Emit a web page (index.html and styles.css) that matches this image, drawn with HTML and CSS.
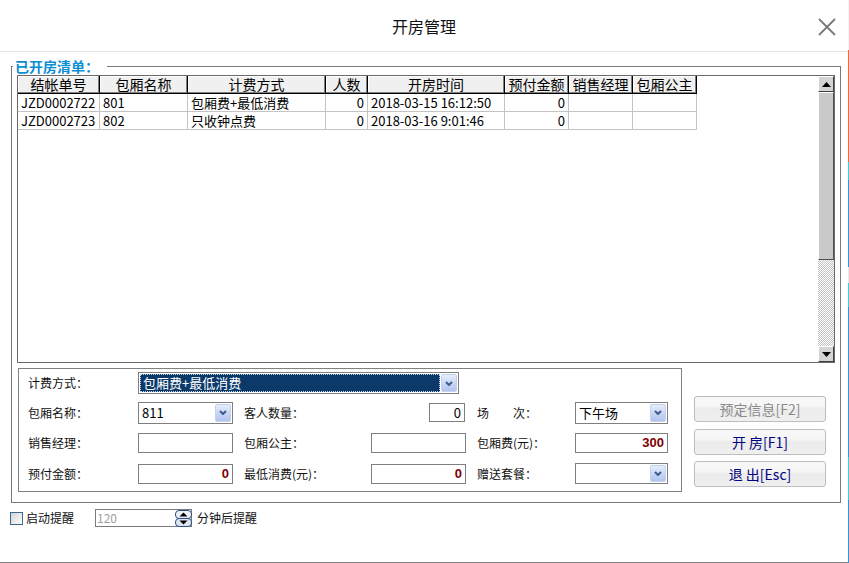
FILE: index.html
```html
<!DOCTYPE html>
<html lang="zh-CN">
<head>
<meta charset="utf-8">
<title>开房管理</title>
<link rel="stylesheet" href="styles.css">
</head>
<body>
<div class="window">
  <div class="dialog">
    <header class="titlebar">
      <span class="spacer"></span>
      <h1 class="title">开房管理</h1>
      <button class="close" type="button" aria-label="关闭">
        <svg width="18" height="18" viewBox="0 0 18 18"><path d="M1 1 L17 17 M17 1 L1 17" stroke="#7a7a7a" stroke-width="1.8" fill="none"/></svg>
      </button>
    </header>

    <fieldset class="group">
      <legend class="group-label">已开房清单：</legend>
      <div class="listview">
        <div class="list-body">
          <table class="grid">
            <colgroup>
              <col class="c1"><col class="c2"><col class="c3"><col class="c4"><col class="c5"><col class="c6"><col class="c7"><col class="c8">
            </colgroup>
            <thead>
              <tr><th>结帐单号</th><th>包厢名称</th><th>计费方式</th><th>人数</th><th>开房时间</th><th>预付金额</th><th>销售经理</th><th>包厢公主</th></tr>
            </thead>
            <tbody>
              <tr><td>JZD0002722</td><td>801</td><td>包厢费+最低消费</td><td class="num">0</td><td>2018-03-15 16:12:50</td><td class="num">0</td><td></td><td></td></tr>
              <tr><td>JZD0002723</td><td>802</td><td>只收钟点费</td><td class="num">0</td><td>2018-03-16 9:01:46</td><td class="num">0</td><td></td><td></td></tr>
            </tbody>
          </table>
        </div>
        <div class="vscroll">
          <div class="sb-btn"><svg width="9" height="5" viewBox="0 0 9 5"><path d="M0 5 L4.5 0 L9 5 Z" fill="#000"/></svg></div>
          <div class="sb-thumb"></div>
          <div class="sb-track"></div>
          <div class="sb-btn"><svg width="9" height="5" viewBox="0 0 9 5"><path d="M0 0 L4.5 5 L9 0 Z" fill="#000"/></svg></div>
        </div>
      </div>

      <div class="lower">
        <div class="form-box">
          <span class="lbl">计费方式：</span>
          <div class="combo combo-wide">
            <span class="combo-value selected"><span class="focus">包厢费+最低消费</span></span>
            <span class="combo-btn"><svg width="8" height="5" viewBox="0 0 8 5"><path d="M1 1 L4 4 L7 1" stroke="#3f5b8c" stroke-width="2" fill="none"/></svg></span>
          </div>

          <span class="lbl">包厢名称：</span>
          <div class="combo">
            <span class="combo-value">811</span>
            <span class="combo-btn"><svg width="8" height="5" viewBox="0 0 8 5"><path d="M1 1 L4 4 L7 1" stroke="#3f5b8c" stroke-width="2" fill="none"/></svg></span>
          </div>
          <span class="lbl lbl-pad">客人数量：</span>
          <span class="field field-small">0</span>
          <span class="lbl lbl-pad">场　　次：</span>
          <div class="combo combo-r">
            <span class="combo-value">下午场</span>
            <span class="combo-btn"><svg width="8" height="5" viewBox="0 0 8 5"><path d="M1 1 L4 4 L7 1" stroke="#3f5b8c" stroke-width="2" fill="none"/></svg></span>
          </div>

          <span class="lbl">销售经理：</span>
          <span class="field"></span>
          <span class="lbl lbl-pad">包厢公主：</span>
          <span class="field"></span>
          <span class="lbl lbl-pad">包厢费(元)：</span>
          <span class="field field-r money">300</span>

          <span class="lbl">预付金额：</span>
          <span class="field money">0</span>
          <span class="lbl lbl-pad">最低消费(元)：</span>
          <span class="field money">0</span>
          <span class="lbl lbl-pad">赠送套餐：</span>
          <div class="combo combo-r combo-short">
            <span class="combo-value"></span>
            <span class="combo-btn"><svg width="8" height="5" viewBox="0 0 8 5"><path d="M1 1 L4 4 L7 1" stroke="#3f5b8c" stroke-width="2" fill="none"/></svg></span>
          </div>
        </div>

        <div class="actions">
          <button class="btn" type="button" disabled>预定信息[F2]</button>
          <button class="btn" type="button">开 房[F1]</button>
          <button class="btn" type="button">退 出[Esc]</button>
        </div>
      </div>
    </fieldset>

    <div class="reminder">
      <span class="check"></span>
      <span class="rem-label">启动提醒</span>
      <span class="spin">
        <span class="spin-value">120</span>
        <svg class="spin-btn" width="17" height="17" viewBox="0 0 17 17">
          <rect x="0.5" y="0.5" width="16" height="8" rx="3.5" fill="#eef2f8" stroke="#2d4c7c"/>
          <rect x="0.5" y="8.5" width="16" height="8" rx="3.5" fill="#dde5f0" stroke="#2d4c7c"/>
          <path d="M4.5 6.5 L8.5 2.5 L12.5 6.5 Z" fill="#000"/>
          <path d="M4.5 10.5 L8.5 14.5 L12.5 10.5 Z" fill="#000"/>
        </svg>
      </span>
      <span class="rem-label rem-after">分钟后提醒</span>
    </div>
  </div>
  <div class="edge"></div>
</div>
</body>
</html>
```

FILE: styles.css
```css
* { box-sizing: border-box; }

html, body {
  margin: 0;
  padding: 0;
}

body {
  width: 849px;
  height: 563px;
  overflow: hidden;
  background: #ffffff;
  color: #000;
  font-family: "Noto Sans CJK SC", "Noto Sans", sans-serif;
}

.window {
  display: flex;
  height: 563px;
}

.dialog {
  width: 848px;
  height: 563px;
  border-bottom: 1px solid #7f7f7f;
  display: flex;
  flex-direction: column;
}

.edge {
  width: 1px;
  background: linear-gradient(to bottom,
    #f4f4f4 0 50px,
    #f26a35 50px 162px,
    #3cd0d6 162px 180px,
    #2e95db 180px 267px,
    #e8e8e8 267px 283px,
    #3cd0d6 283px 307px,
    #2e95db 307px 457px,
    #3cd0d6 457px 500px,
    #2e95db 500px 563px);
}

/* title bar */
.titlebar {
  height: 52px;
  border-bottom: 1px solid #e4e4e4;
  display: grid;
  grid-template-columns: 1fr auto 1fr;
  align-items: center;
}

.title {
  margin: 0;
  font-size: 16px;
  font-weight: normal;
  line-height: 20px;
  color: #111;
}

.close {
  justify-self: end;
  margin: 2px 12px 0 0;
  padding: 0;
  border: 0;
  background: none;
  display: flex;
}

/* group box */
.group {
  margin: 7px 7px 0 11px;
  padding: 2px 5px 10px 5px;
  border: 1px solid #7a7a7a;
  min-width: 0;
}

.group-label {
  margin-left: -4px;
  padding: 0 8px 0 2px;
  font-size: 14px;
  line-height: 14px;
  font-weight: bold;
  color: #0a8ed4;
}

/* list view */
.listview {
  height: 288px;
  border: 1px solid #6a6a6a;
  display: flex;
}

.list-body {
  flex: 1;
  background: #fff;
}

.grid {
  table-layout: fixed;
  border-collapse: separate;
  border-spacing: 0;
  width: 679px;
  font-size: 14px;
}

.c1 { width: 82px; }
.c2 { width: 88px; }
.c3 { width: 138px; }
.c4 { width: 42px; }
.c5 { width: 137px; }
.c6 { width: 64px; }
.c7 { width: 64px; }
.c8 { width: 64px; }

.grid th {
  height: 18px;
  padding: 0;
  font-weight: normal;
  font-size: 14px;
  line-height: 17px;
  text-align: center;
  background: #f0f0f0;
  border-right: 1px solid #000;
  border-bottom: 1px solid #000;
  box-shadow: inset -1px -1px 0 #808080, inset 1px 1px 0 #ffffff;
  white-space: nowrap;
}

.grid td {
  height: 18px;
  padding: 0 3px;
  font-size: 13px;
  line-height: 17px;
  border-right: 1px solid #c4c4c4;
  border-bottom: 1px solid #c4c4c4;
  white-space: nowrap;
}

.grid td.num {
  text-align: right;
}

/* scrollbar */
.vscroll {
  width: 16px;
  display: flex;
  flex-direction: column;
}

.sb-btn {
  height: 16px;
  background: #d4d4d4;
  border: 1px solid;
  border-color: #ffffff #404040 #404040 #ffffff;
  display: flex;
  align-items: center;
  justify-content: center;
}

.sb-thumb {
  height: 168px;
  background: #c9c9c9;
  border: 1px solid;
  border-color: #ffffff #505050 #505050 #ffffff;
}

.sb-track {
  flex: 1;
  background: repeating-conic-gradient(#c3c3c3 0 25%, #ffffff 0 50%) 0 0 / 2px 2px;
}

/* lower area */
.lower {
  display: flex;
  margin-top: 5px;
  padding-left: 1px;
}

.form-box {
  width: 664px;
  height: 124px;
  border: 1px solid #808080;
  padding-left: 9px;
  display: grid;
  grid-template-columns: 110px 95px 138px 95px 109px 93px;
  grid-template-rows: 28px 31px 30px 31px;
  align-items: center;
  font-size: 12px;
}

.lbl {
  font-size: 12px;
  line-height: 16px;
  white-space: nowrap;
  color: #111;
}

.lbl-pad {
  padding-left: 11px;
}

.field {
  height: 20px;
  border: 1px solid #7f7f7f;
  background: #fff;
  font-size: 13px;
  line-height: 18px;
  text-align: right;
  padding: 0 3px;
}

.field-small {
  width: 36px;
  height: 19px;
  line-height: 17px;
  justify-self: end;
  margin-right: 1px;
}

.money {
  font-family: "Liberation Sans", "DejaVu Sans", sans-serif;
  font-weight: bold;
  color: #800000;
}

.combo {
  height: 22px;
  border: 1px solid #7f7f7f;
  background: #fff;
  display: flex;
  align-items: stretch;
  padding: 1px;
}

.combo-wide {
  grid-column: 2 / span 5;
  justify-self: start;
  width: 321px;
}

.combo-r {
  width: 93px;
}

.combo-short {
  height: 21px;
}

.combo-value {
  flex: 1;
  font-size: 13px;
  line-height: 18px;
  padding-left: 2px;
  white-space: nowrap;
}

.combo-value.selected {
  background: #0b396a;
  color: #fff;
  padding: 0;
  margin-right: 1px;
  display: flex;
}

.focus {
  flex: 1;
  border: 1px dotted #c8d4e4;
  padding-left: 2px;
  line-height: 16px;
}

.combo-btn {
  width: 16px;
  border: 1px solid #c3d1ee;
  border-radius: 2px;
  background: linear-gradient(to bottom, #e6eefc, #c4d3f3 60%, #b3c5ee);
  display: flex;
  align-items: center;
  justify-content: center;
}

/* buttons */
.actions {
  margin-left: 12px;
  padding-top: 28px;
  display: flex;
  flex-direction: column;
  gap: 6.5px;
}

.btn {
  width: 132px;
  height: 26px;
  padding: 0;
  border: 1px solid #bdbdbd;
  border-radius: 3px;
  background: linear-gradient(to bottom, #f7f7f7 0, #f7f7f7 35%, #ececec 50%, #efefef 100%);
  font-family: "Noto Sans CJK SC", sans-serif;
  font-size: 14px;
  line-height: 18px;
  color: #000080;
}

.btn:disabled {
  color: #8a8a8a;
}

/* reminder */
.reminder {
  display: flex;
  align-items: center;
  height: 18px;
  margin-top: 6px;
  padding-left: 10px;
}

.check {
  width: 13px;
  height: 13px;
  border: 1px solid #3d6690;
  background: linear-gradient(135deg, #d2d2d2, #ffffff);
}

.rem-label {
  margin-left: 3px;
  font-size: 12px;
  line-height: 16px;
  color: #111;
}

.spin {
  margin-left: 21px;
  width: 97px;
  height: 18px;
  border: 1px solid #7a7a7a;
  display: flex;
  align-items: center;
}

.spin-value {
  flex: 1;
  font-size: 12px;
  line-height: 16px;
  padding-left: 1px;
  color: #a0a0a0;
}

.spin-btn {
  display: block;
  margin-right: -1px;
}

.rem-after {
  margin-left: 5px;
}
```
